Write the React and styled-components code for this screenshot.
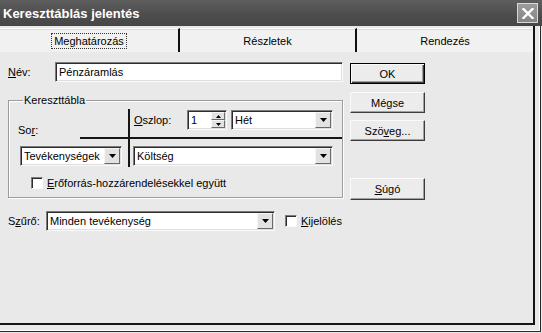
import React from "react";
import styled, { createGlobalStyle } from "styled-components";

const GlobalStyle = createGlobalStyle`
  html, body { margin: 0; padding: 0; background: #e9e9e9; }
  body { font-family: "Liberation Sans", Arial, sans-serif; font-size: 11px; color: #000; }
  * { box-sizing: border-box; }
`;

const Window = styled.div`
  width: 542px;
  height: 333px;
  display: flex;
  flex-direction: column;
  background: #e9e9e9;
  overflow: hidden;
`;

const TitleBar = styled.div`
  height: 26px;
  flex: none;
  display: flex;
  align-items: center;
  justify-content: space-between;
  padding: 0 4px 0 3px;
  background: linear-gradient(#5e5e5e, #4c4c4c 60%, #474747);
  color: #fff;
  font-weight: bold;
  font-size: 13px;
`;

const CloseBtn = styled.div`
  width: 21px;
  height: 20px;
  border: 1px solid #d8d8d8;
  background: linear-gradient(#9c9c9c, #858585);
  display: flex;
  align-items: center;
  justify-content: center;
`;

const Frame = styled.div`
  flex: 1;
  display: flex;
  flex-direction: column;
  margin-right: 1px;
  margin-bottom: 1px;
  padding-right: 5px;
  padding-bottom: 6px;
  border-right: 1px solid #2a2a2a;
  border-bottom: 1px solid #2a2a2a;
  box-shadow: inset -1px -1px 0 #fff;
`;

const Panel = styled.div`
  flex: 1;
  display: flex;
  flex-direction: column;
  border-right: 2px solid #151515;
  border-bottom: 2px solid #151515;
`;

const TabRow = styled.div`
  height: 26px;
  display: flex;
  flex: none;
`;

const Tab = styled.div`
  width: ${(p) => p.$w}px;
  margin-top: 2px;
  padding-top: 1px;
  display: flex;
  align-items: center;
  justify-content: center;
  background: #f1f1f1;
  border-top: 1px solid #fbfbfb;
  border-right: ${(p) => (p.$last ? "none" : "2px solid #111")};
  box-shadow: inset 0 1px 0 #dcdcdc;
`;

const TabLabel = styled.span`
  padding: 1px 2px;
  border: 1px dotted ${(p) => (p.$focus ? "#333" : "transparent")};
`;

const Content = styled.div`
  display: grid;
  grid-template-columns: 343px 75px;
  column-gap: 7px;
  padding-top: 10px;
  align-items: start;
`;

const LeftCol = styled.div`
  display: flex;
  flex-direction: column;
`;

const Row = styled.div`
  display: flex;
  align-items: center;
  height: 20px;
  padding-left: ${(p) => p.$pl || 0}px;
  margin-top: ${(p) => p.$mt || 0}px;
`;

const Label = styled.span`
  width: ${(p) => p.$w}px;
  flex: none;
`;

const U = styled.span`
  text-decoration: underline;
`;

const Field = styled.div`
  height: 20px;
  width: ${(p) => (p.$w ? `${p.$w}px` : "auto")};
  flex: ${(p) => (p.$w ? "none" : 1)};
  background: #fff;
  border: 1px solid;
  border-color: #7c7c7c #fafafa #fafafa #7c7c7c;
  box-shadow: inset 1px 1px 0 #2c2c2c, inset -1px -1px 0 #dedede;
  display: flex;
  align-items: center;
  padding-left: 3px;
`;

const FieldText = styled.span`
  flex: 1;
  white-space: nowrap;
  overflow: hidden;
`;

const ArrowBtn = styled.div`
  width: 16px;
  height: 16px;
  margin-right: 1px;
  flex: none;
  background: #e2e2e2;
  border: 1px solid;
  border-color: #f6f6f6 #6a6a6a #6a6a6a #f6f6f6;
  display: flex;
  align-items: center;
  justify-content: center;
`;

const Group = styled.fieldset`
  margin: 12px 0 0 8px;
  padding: 3px 0 8px 11px;
  border: 1px solid #9c9c9c;
  box-shadow: inset 1px 1px 0 #fff, 1px 1px 0 #fff;
  min-width: 0;
`;

const Legend = styled.legend`
  padding: 0 1px;
  margin-left: 3px;
  font-size: 11px;
`;

const CrossRow = styled.div`
  display: flex;
  height: 28px;
`;

const LeftCell = styled.div`
  flex: none;
  display: flex;
  align-items: ${(p) => (p.$bottom ? "flex-end" : "flex-start")};
  padding-top: ${(p) => (p.$bottom ? 0 : 7)}px;
  margin-left: ${(p) => (p.$bottom ? -2 : 0)}px;
  width: ${(p) => (p.$bottom ? 110 : 108)}px;
  line-height: ${(p) => (p.$bottom ? "11px" : "normal")};
  padding-bottom: ${(p) => (p.$bottom ? 1 : 0)}px;
`;

const RightCell = styled.div`
  flex: 1;
  display: flex;
  align-items: flex-start;
  gap: 4px;
  border-left: 2px solid #151515;
  padding-left: ${(p) => p.$pl}px;
  padding-top: ${(p) => p.$pt}px;
`;

const HLine = styled.div`
  height: 2px;
  margin-left: 60px;
  background: #151515;
`;

const ColLabel = styled.span`
  width: 49px;
  flex: none;
  line-height: 20px;
`;

const Spinner = styled(Field)`
  padding-left: 3px;
  padding-right: 1px;
`;

const SpinBtns = styled.div`
  width: 14px;
  height: 16px;
  display: flex;
  flex-direction: column;
`;

const SpinBtn = styled.div`
  flex: 1;
  background: #e2e2e2;
  border: 1px solid;
  border-color: #f6f6f6 #6a6a6a #6a6a6a #f6f6f6;
  display: flex;
  align-items: center;
  justify-content: center;
`;

const CheckRow = styled.div`
  display: flex;
  align-items: center;
  gap: 4px;
  padding-left: ${(p) => p.$pl || 0}px;
  margin-top: ${(p) => p.$mt || 0}px;
`;

const Check = styled.div`
  width: 12px;
  height: 12px;
  flex: none;
  background: #fff;
  border: 1px solid;
  border-color: #7c7c7c #fafafa #fafafa #7c7c7c;
  box-shadow: inset 1px 1px 0 #2c2c2c;
`;

const RightCol = styled.div`
  display: flex;
  flex-direction: column;
  padding-top: 1px;
`;

const Button = styled.div`
  height: ${(p) => p.$h || 21}px;
  width: 75px;
  margin-top: ${(p) => p.$mt || 0}px;
  display: flex;
  align-items: center;
  justify-content: center;
  background: #ececec;
  border: 1px solid;
  border-color: ${(p) => (p.$default ? "#000" : "#fafafa #3c3c3c #3c3c3c #fafafa")};
  box-shadow: ${(p) =>
    p.$default
      ? "inset 1px 1px 0 #fafafa, inset -1px -1px 0 #3c3c3c, inset -2px -2px 0 #a0a0a0"
      : "inset -1px -1px 0 #a0a0a0"};
`;

const Down = () => (
  <svg width="7" height="4" viewBox="0 0 7 4">
    <path d="M0 0h7L3.5 4z" fill="#000" />
  </svg>
);

const Combo = ({ w, children }) => (
  <Field $w={w}>
    <FieldText>{children}</FieldText>
    <ArrowBtn>
      <Down />
    </ArrowBtn>
  </Field>
);

export default function App() {
  return (
    <>
      <GlobalStyle />
      <Window>
        <TitleBar>
          <span>Kereszttáblás jelentés</span>
          <CloseBtn>
            <svg width="12" height="11" viewBox="0 0 12 11">
              <path d="M1.5 1l9 9M10.5 1l-9 9" stroke="#fff" strokeWidth="2.4" strokeLinecap="square" />
            </svg>
          </CloseBtn>
        </TitleBar>
        <Frame>
          <Panel>
            <TabRow>
              <Tab $w={180}>
                <TabLabel $focus>Meghatározás</TabLabel>
              </Tab>
              <Tab $w={177}>
                <TabLabel>Részletek</TabLabel>
              </Tab>
              <Tab $w={176} $last>
                <TabLabel>Rendezés</TabLabel>
              </Tab>
            </TabRow>
            <Content>
              <LeftCol>
                <Row $pl={8}>
                  <Label $w={47}>
                    <U>N</U>év:
                  </Label>
                  <Field>
                    <FieldText>Pénzáramlás</FieldText>
                  </Field>
                </Row>
                <Group>
                  <Legend>Kereszttábla</Legend>
                  <CrossRow>
                    <LeftCell $bottom>
                      <span>
                        So<U>r</U>:
                      </span>
                    </LeftCell>
                    <RightCell $pl={4} $pt={1}>
                      <ColLabel>
                        <U>O</U>szlop:
                      </ColLabel>
                      <Spinner $w={40}>
                        <FieldText>1</FieldText>
                        <SpinBtns>
                          <SpinBtn>
                            <svg width="5" height="3" viewBox="0 0 5 3">
                              <path d="M0 3h5L2.5 0z" fill="#000" />
                            </svg>
                          </SpinBtn>
                          <SpinBtn>
                            <svg width="5" height="3" viewBox="0 0 5 3">
                              <path d="M0 0h5L2.5 3z" fill="#000" />
                            </svg>
                          </SpinBtn>
                        </SpinBtns>
                      </Spinner>
                      <Combo w={102}>Hét</Combo>
                    </RightCell>
                  </CrossRow>
                  <HLine />
                  <CrossRow>
                    <LeftCell>
                      <Combo w={102}>Tevékenységek</Combo>
                    </LeftCell>
                    <RightCell $pl={3} $pt={7}>
                      <Combo w={200}>Költség</Combo>
                    </RightCell>
                  </CrossRow>
                  <CheckRow $pl={11} $mt={10}>
                    <Check />
                    <span>
                      <U>E</U>rőforrás-hozzárendelésekkel együtt
                    </span>
                  </CheckRow>
                </Group>
                <Row $pl={8} $mt={13}>
                  <Label $w={38}>
                    S<U>z</U>űrő:
                  </Label>
                  <Combo w={229}>Minden tevékenység</Combo>
                  <CheckRow $pl={10}>
                    <Check />
                    <span>
                      <U>K</U>ijelölés
                    </span>
                  </CheckRow>
                </Row>
              </LeftCol>
              <RightCol>
                <Button $default>OK</Button>
                <Button $mt={8}>Mégse</Button>
                <Button $mt={7}>
                  <span>
                    Szö<U>v</U>eg...
                  </span>
                </Button>
                <Button $mt={37} $h={22}>
                  <span>
                    <U>S</U>úgó
                  </span>
                </Button>
              </RightCol>
            </Content>
          </Panel>
        </Frame>
      </Window>
    </>
  );
}
